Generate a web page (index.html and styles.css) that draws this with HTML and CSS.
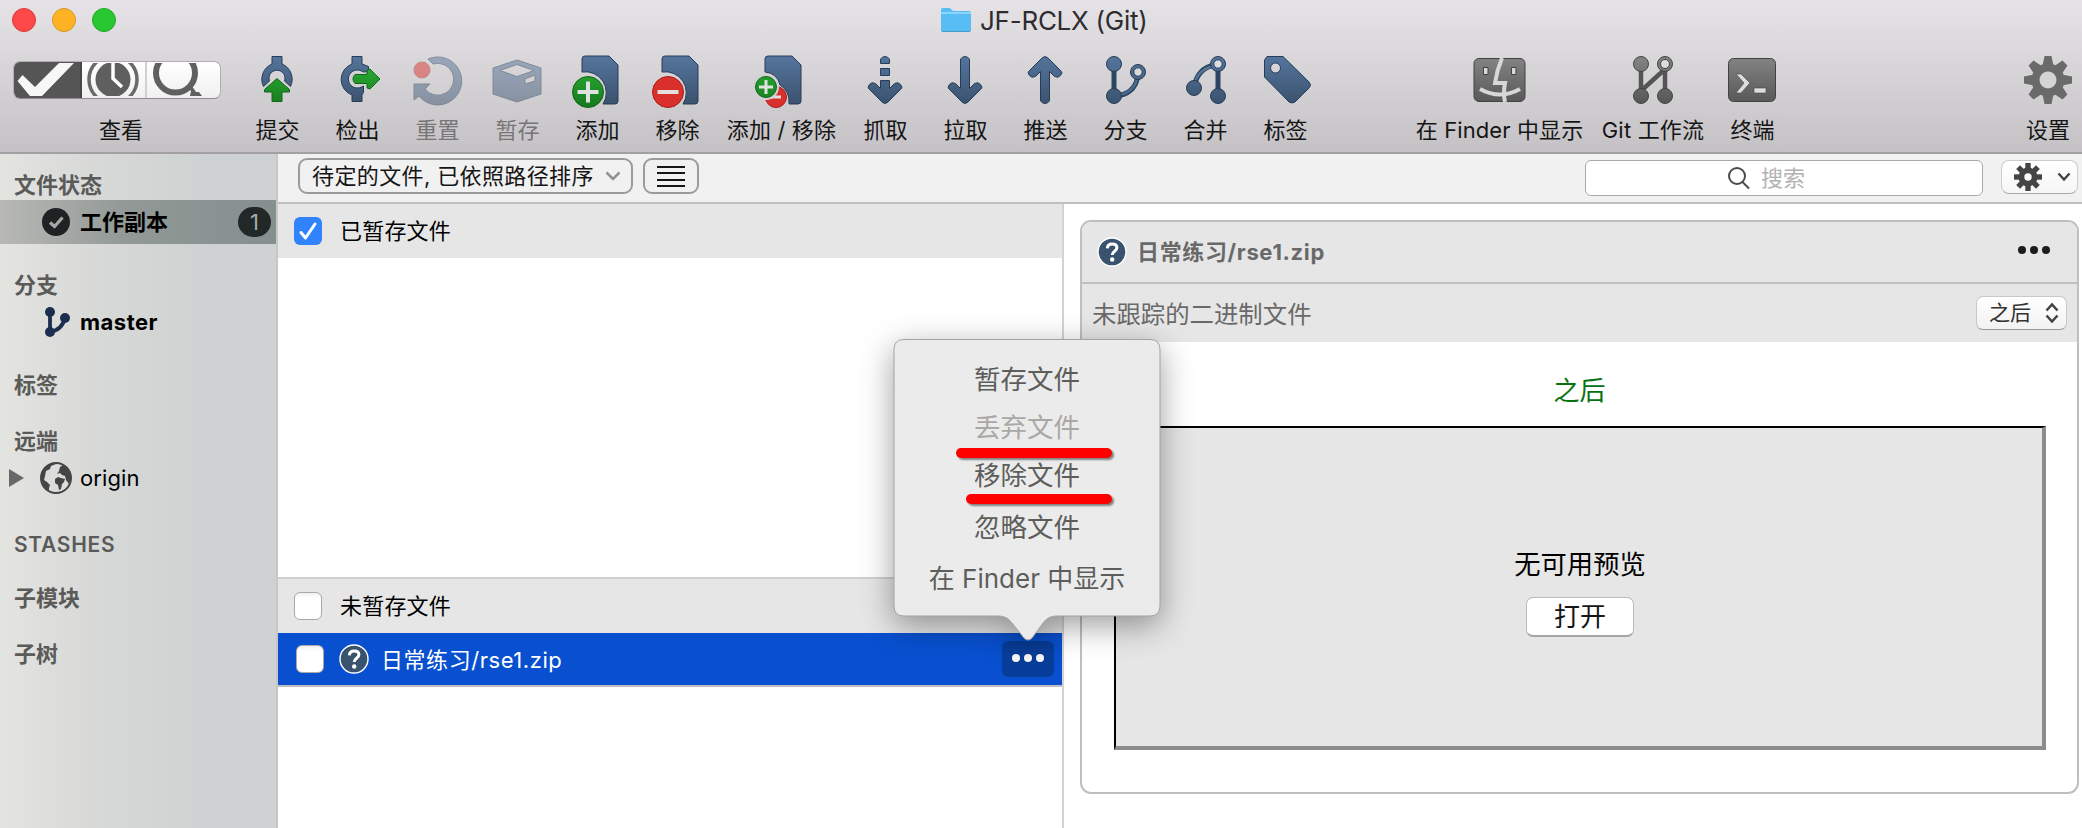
FILE: index.html
```html
<!DOCTYPE html>
<html lang="zh-CN">
<head>
<meta charset="utf-8">
<title>JF-RCLX (Git)</title>
<link rel="stylesheet" href="styles.css">
</head>
<body>
<svg class="defs" width="0" height="0" aria-hidden="true">
  <defs>
    <linearGradient id="blue" gradientUnits="userSpaceOnUse" x1="0" y1="2" x2="0" y2="50"><stop offset="0" stop-color="#56759d"/><stop offset="1" stop-color="#3a526e"/></linearGradient>
    <linearGradient id="green" gradientUnits="userSpaceOnUse" x1="0" y1="18" x2="0" y2="52"><stop offset="0" stop-color="#27a430"/><stop offset="1" stop-color="#167a1e"/></linearGradient>
    <linearGradient id="grey" gradientUnits="userSpaceOnUse" x1="0" y1="2" x2="0" y2="50"><stop offset="0" stop-color="#858585"/><stop offset="1" stop-color="#565656"/></linearGradient>
    <symbol id="question" viewBox="0 0 30 30">
      <circle cx="15" cy="15" r="14" fill="#39536f" stroke="#fff" stroke-width="1.4"/>
      <path d="M10.300 11.300C10.500 8.400 12.400 6.900 15.200 6.900c2.900 0 4.700 1.600 4.700 3.900 0 3.400-4.700 3.500-4.700 7.200" fill="none" stroke="#fff" stroke-width="3"/>
      <circle cx="15.200" cy="22.500" r="2.200" fill="#fff"/>
    </symbol>
  </defs>
</svg>
<div class="window">
  <header class="header">
    <div class="titlebar">
      <div class="lights"><i class="light red"></i><i class="light amber"></i><i class="light lime"></i></div>
      <div class="title">
        <svg width="32" height="26" viewBox="0 0 32 26"><path d="M1 3q0-2 2-2h7l3 3h16q2 0 2 2v17q0 2-2 2H3q-2 0-2-2z" fill="#57bdf4"/><path d="M1 6h30" stroke="#8bd5fb" stroke-width="2"/><path d="M2 24.500h28" stroke="#459bc9"/></svg>
        <span>JF-RCLX (Git)</span>
      </div>
    </div>
    <nav class="toolbar">
      <div class="tool view">
        <div class="segments">
          <span class="seg on"><svg width="66" height="33" viewBox="0 1 66 33"><path d="M3.500 19l5-6L21 25 45 1h15L28 34H16z" fill="#f7f7f7"/></svg></span>
          <span class="seg"><svg width="64" height="33" viewBox="0 2 64 33"><g transform="translate(31 18.500)"><circle r="24" fill="none" stroke="#6a6a6a" stroke-width="3.500"/><circle r="17.500" fill="#5f5f5f"/><path d="M0-17V-1l9 8.500" fill="none" stroke="#fff" stroke-width="3.500"/></g></svg></span>
          <span class="seg"><svg width="73" height="33" viewBox="0 1 73 33"><circle cx="28.500" cy="11" r="19.500" fill="none" stroke="#606060" stroke-width="6"/><path d="M41 26l3 3-1 5h12l-3-4h-3l-4-6z" fill="#606060"/></svg></span>
        </div>
        <span class="label">查看</span>
      </div>
      <div class="tool"><svg class="icon" viewBox="0 0 56 56"><path d="M23 2.500h10V10a16.500 16.500 0 0 1 8.500 22.500L35.500 27a8 8 0 1 0-15 0l-6 5.500A16.500 16.500 0 0 1 23 10z" fill="url(#blue)" stroke="#263d59"/><path d="M28 24.500l12.500 11v2.500H33v9.500H23V38h-7.500v-2.500z" fill="url(#green)" stroke="#14671b" stroke-linejoin="round"/></svg><span class="label">提交</span></div>
      <div class="tool"><svg class="icon" viewBox="0 0 56 56"><path d="M23 2.500h10V10l6.500 2.500v5l-5 .5-2-1a9 9 0 1 0 0 16l2-1v6.500L33 41v6.500H23V41a16.500 16.500 0 0 1 0-31z" fill="url(#blue)" stroke="#263d59"/><path d="M24 19h16l11 6-11 6H24q-7-6 0-12z" fill="#cfcfd1"/><path d="M26 20.500h12V16l3-1 10 10-10 10-3-1v-4.500H26q-4-4.500 0-9z" fill="url(#green)" stroke="#14671b" stroke-linejoin="round"/></svg><span class="label">检出</span></div>
      <div class="tool off"><svg class="icon" viewBox="0 0 56 56"><circle cx="13" cy="16" r="8" fill="#dc2f2a" stroke="#b0322d"/><path d="M19 5A24 24 0 1 1 10 42L5 46V30h16l-5 5A16 16 0 1 0 24 10z" fill="url(#blue)" stroke="#263d59"/></svg><span class="label">重置</span></div>
      <div class="tool off"><svg class="icon" viewBox="0 0 56 56"><path d="M4 14l24-8 24 8v26l-24 8-24-8zM11 16.500l17 6 17-6-17-6zM36 25v5l10-3v-6z" fill="url(#blue)" fill-rule="evenodd" stroke="#263d59"/></svg><span class="label">暂存</span></div>
      <div class="tool"><svg class="icon" viewBox="0 0 56 56"><path d="M16 2h24l9 9v36q0 3-3 3H34a21 21 0 0 0-21-32V5q0-3 3-3z" fill="url(#blue)" stroke="#263d59"/><circle cx="19" cy="38" r="15.500" fill="url(#green)" stroke="#14671b"/><path d="M8.500 38h21M19 27.500v21" stroke="#e0e2e0" stroke-width="4"/></svg><span class="label">添加</span></div>
      <div class="tool"><svg class="icon" viewBox="0 0 56 56"><path d="M16 2h24l9 9v36q0 3-3 3H34a21 21 0 0 0-21-32V5q0-3 3-3z" fill="url(#blue)" stroke="#263d59"/><circle cx="19" cy="38" r="15.500" fill="#d9302b" stroke="#a81e1d"/><path d="M8.500 38h21" stroke="#e5dede" stroke-width="4"/></svg><span class="label">移除</span></div>
      <div class="tool wide"><svg class="icon" viewBox="0 0 56 56"><path d="M15 2h24l9 9v36q0 3-3 3h-9q1-13-9-19-3-12-15-13V5q0-3 3-3z" fill="url(#blue)" stroke="#263d59"/><circle cx="23" cy="43" r="10.500" fill="#d9302b" stroke="#a81e1d"/><path d="M17 43h11" stroke="#e5dede" stroke-width="3"/><circle cx="13" cy="33" r="13" fill="#d2d0d2"/><circle cx="13" cy="33" r="10.500" fill="url(#green)" stroke="#14671b"/><path d="M6 33h14M13 26v14" stroke="#e0e2e0" stroke-width="3"/></svg><span class="label">添加 / 移除</span></div>
      <div class="tool"><svg class="icon" viewBox="0 0 56 56"><path d="M23.500 9.500V5q4.500-5 9 0v4.500zM23.500 14.500h9v7h-9zM23.500 26.500h9v8l5-5q4-2 6 1 3 3 0 5L31 48q-3 3-6 0L12.500 35.500q-3-2 0-5 2-3 6-1l5 5z" fill="url(#blue)" stroke="#263d59"/></svg><span class="label">抓取</span></div>
      <div class="tool"><svg class="icon" viewBox="0 0 56 56"><path d="M23.500 5q4.500-5 9 0v29.500l5-5q4-2 6 1 3 3 0 5L31 48q-3 3-6 0L12.500 35.500q-3-2 0-5 2-3 6-1l5 5z" fill="url(#blue)" stroke="#263d59"/></svg><span class="label">拉取</span></div>
      <div class="tool"><svg class="icon" viewBox="0 0 56 56"><path d="M23.500 47q4.500 5 9 0V17.500l5 5q4 2 6-1 3-3 0-5L31 4q-3-3-6 0L12.500 16.500q-3 2 0 5 2 3 6 1l5-5z" fill="url(#blue)" stroke="#263d59"/></svg><span class="label">推送</span></div>
      <div class="tool"><svg class="icon" viewBox="0 0 56 56"><path d="M17 10v32M40.500 24Q37 40 19 42" fill="none" stroke="#2c4560" stroke-width="5"/><path d="M40 26Q36 38 23 41" fill="none" stroke="#4c6a8d" stroke-width="2.500"/><g fill="url(#blue)" stroke="#263d59"><circle cx="17" cy="10" r="7.500"/><circle cx="17" cy="42" r="7.500"/><circle cx="41" cy="18" r="7.500"/></g><circle cx="41" cy="18" r="4.200" fill="#dad8da" stroke="#263d59"/></svg><span class="label">分支</span></div>
      <div class="tool"><svg class="icon" viewBox="0 0 56 56"><path d="M41 10v32M17 34Q20 14 38 11" fill="none" stroke="#2c4560" stroke-width="5"/><path d="M18 28Q21 17 34 12.500" fill="none" stroke="#56739a" stroke-width="2.500"/><g fill="url(#blue)" stroke="#263d59"><circle cx="41" cy="10" r="7.500"/><circle cx="17" cy="34" r="7.500"/><circle cx="41" cy="42" r="7.500"/></g><circle cx="41" cy="10" r="4.200" fill="#dddbdd" stroke="#263d59"/></svg><span class="label">合并</span></div>
      <div class="tool"><svg class="icon" viewBox="0 0 56 56"><path d="M10 2.500h16L52 28q3 3 0 6L38 48q-3 2-6 0L7.500 23V6zM23.500 14a5 5 0 1 0-10 0 5 5 0 0 0 10 0z" fill="url(#blue)" fill-rule="evenodd" stroke="#263d59"/></svg><span class="label">标签</span></div>
      <div class="tool finder"><svg class="icon" viewBox="0 0 56 56"><rect x="3" y="4.500" width="51" height="43" rx="5" fill="url(#grey)" stroke="#424242"/><g fill="none" stroke="#d8d6d8"><path d="M31 4q-5 12-7 25h10q-2 10 0 19" stroke-width="4"/><path d="M9 35q20 11 40 0" stroke-width="4"/></g><g fill="#dad8da" stroke="#424242"><path d="M12.500 13.500h4.500v7h-4.500zM40.500 13.500H45v7h-4.500z"/></g></svg><span class="label">在 Finder 中显示</span></div>
      <div class="tool flow"><svg class="icon" viewBox="0 0 56 56"><path d="M16 10v32M40 10v32M17 36l22-20" fill="none" stroke="#555" stroke-width="4.500"/><g fill="url(#grey)" stroke="#444"><circle cx="16" cy="10" r="7.500"/><circle cx="16" cy="42" r="7.500"/><circle cx="40" cy="10" r="7.500"/><circle cx="40" cy="42" r="7.500"/></g><circle cx="40" cy="10" r="4.500" fill="#dddbdd" stroke="#444"/></svg><span class="label">Git 工作流</span></div>
      <div class="tool term"><svg class="icon" viewBox="0 0 56 56"><rect x="4.500" y="4.500" width="47" height="43" rx="5" fill="url(#grey)" stroke="#424242"/><path d="M12 20h5l9 9-9 10h-5l8-10zM30 34h12v5H30z" fill="#dedcde" stroke="#444" stroke-width=".6"/></svg><span class="label">终端</span></div>
      <div class="tool prefs"><svg class="icon" viewBox="-28 -26 56 56"><g class="gear"><path d="M-5.500-14l2-10h7l2 10v28l-2 10h-7l-2-10z"/><path d="M-5.500-14l2-10h7l2 10v28l-2 10h-7l-2-10z" transform="rotate(45)"/><path d="M-5.500-14l2-10h7l2 10v28l-2 10h-7l-2-10z" transform="rotate(90)"/><path d="M-5.500-14l2-10h7l2 10v28l-2 10h-7l-2-10z" transform="rotate(135)"/><circle r="16.500"/><circle r="8.500" class="hole"/></g></svg><span class="label">设置</span></div>
    </nav>
  </header>

  <div class="body">
    <aside class="sidebar">
      <h2 class="group g-status">文件状态</h2>
      <div class="row selected">
        <svg width="28" height="28" viewBox="0 0 28 28"><circle cx="14" cy="14" r="14" fill="#1f2222"/><path d="M8 14.500l4.500 4 8-9" fill="none" stroke="#a4a8a6" stroke-width="3.200"/></svg>
        <span>工作副本</span><b class="badge">1</b>
      </div>
      <h2 class="group g-branch">分支</h2>
      <div class="row branch">
        <svg width="28" height="32" viewBox="0 0 28 32"><g fill="none" stroke="#1c2e50" stroke-width="3.800"><path d="M8 6v20M23 12Q20 24 8 26"/></g><g fill="#1c2e50"><circle cx="8" cy="6" r="5"/><circle cx="8" cy="26" r="5"/><circle cx="23" cy="12" r="5"/></g></svg>
        <span>master</span>
      </div>
      <h2 class="group g-tag">标签</h2>
      <h2 class="group g-remote">远端</h2>
      <div class="row remote">
        <svg width="16" height="18" viewBox="0 0 16 18"><path d="M0 0l15 9-15 9z" fill="#686868"/></svg>
        <svg class="globe" width="32" height="32" viewBox="0 0 32 32"><circle cx="16" cy="16" r="15" fill="#dcdddb" stroke="#454545" stroke-width="2"/><path d="M2 11q3-8 11-10l3 1-5 2-1 3-4 2-1 5-1 4 3 2 3 3-1 3v4q-8-4-8-14zM15 17l3-2 3 1 4 1-1 3-2 2-1 5-2 1-1-5-3-2zM17 12l2-3 1-4 3-2q7 5 8 13l-2 6-3-4-1-4-3-1-2-2z" fill="#454545"/></svg>
        <span>origin</span>
      </div>
      <h2 class="group g-stash">STASHES</h2>
      <h2 class="group g-sub">子模块</h2>
      <h2 class="group g-tree">子树</h2>
    </aside>

    <main class="main">
      <div class="filterbar">
        <div class="select"><span>待定的文件, 已依照路径排序</span><svg width="16" height="10" viewBox="0 0 16 10"><path d="M1.500 1.500L8 8l6.500-6.500" fill="none" stroke="#929292" stroke-width="2.500"/></svg></div>
        <div class="listbtn"><i></i><i></i><i></i><i></i></div>
        <div class="search"><svg width="24" height="24" viewBox="0 0 24 24"><g fill="none" stroke="#4b4b4b" stroke-width="2"><circle cx="10" cy="10" r="8"/><path d="M15.500 16l6.500 6.500"/></g></svg><span>搜索</span></div>
        <div class="gearbtn">
          <svg width="28" height="28" viewBox="-14 -14 28 28"><g fill="#454545"><circle r="9.500"/><path d="M-2.700-14h5.400v28h-5.400z"/><path d="M-2.700-14h5.400v28h-5.400z" transform="rotate(45)"/><path d="M-2.700-14h5.400v28h-5.400z" transform="rotate(90)"/><path d="M-2.700-14h5.400v28h-5.400z" transform="rotate(135)"/></g><circle r="3.700" fill="#fafafa"/></svg>
          <svg width="14" height="10" viewBox="0 0 14 10"><path d="M1.500 1.500L7 7.500l5.500-6" fill="none" stroke="#444" stroke-width="2.500"/></svg>
        </div>
      </div>

      <div class="panes">
        <section class="files">
          <div class="filehead"><span class="check checked"><svg width="28" height="28" viewBox="0 0 28 28"><path d="M7 15.500l4.500 5.500L21 7" fill="none" stroke="#fff" stroke-width="3" stroke-linecap="round" stroke-linejoin="round"/></svg></span><span>已暂存文件</span></div>
          <div class="staged"></div>
          <div class="filehead unstaged"><span class="check"></span><span>未暂存文件</span></div>
          <div class="file">
            <span class="check"></span>
            <svg width="30" height="30"><use href="#question"/></svg>
            <span class="filename">日常练习/rse1.zip</span>
            <span class="more"><i></i><i></i><i></i></span>
          </div>
          <div class="popover">
            <svg class="balloon" width="268" height="302" viewBox="0 0 268 302"><path d="M11 .5H257q10 0 10 10V267q0 10-10 10H163q-8 0-13 7l-11 15q-4 4-8 0L119 284q-5-7-13-7H11q-10 0-10-10V10.500q0-10 10-10z" fill="#ebebeb" stroke="#a3a3a3"/></svg>
            <div class="menu">
              <span>暂存文件</span><span class="dim">丢弃文件</span><span>移除文件</span><span class="ignore">忽略文件</span><span class="reveal">在 Finder 中显示</span>
            </div>
            <i class="mark first"></i><i class="mark second"></i>
          </div>
        </section>

        <section class="detail">
          <article class="card">
            <div class="cardhead"><svg width="30" height="30"><use href="#question"/></svg><strong>日常练习/rse1.zip</strong><span class="dots"><i></i><i></i><i></i></span></div>
            <div class="cardsub"><span>未跟踪的二进制文件</span><span class="popup">之后<svg width="14" height="20" viewBox="0 0 14 20"><path d="M1.500 7.500L7 1.500l5.500 6M1.500 12.500l5.500 6 5.500-6" fill="none" stroke="#424242" stroke-width="2.500"/></svg></span></div>
            <div class="after">之后</div>
            <div class="preview"><span>无可用预览</span><button class="open">打开</button></div>
          </article>
        </section>
      </div>
    </main>
  </div>
</div>
</body>
</html>
```

FILE: styles.css
```css
* { box-sizing: border-box; }
body { margin: 0; background: #fff; font: 22px/30px Inter, "Noto Sans CJK SC", sans-serif; color: #111; }
.defs { position: absolute; }
svg { display: block; flex: none; }
.window { width: 2082px; height: 828px; overflow: hidden; display: flex; flex-direction: column; }

.header { height: 154px; flex: none; background: linear-gradient(#e5e3e5, #d5d3d5 50%, #c5c2c5); border-bottom: 2px solid #a3a0a3; }
.titlebar { height: 41px; display: grid; grid-template-columns: 940px auto; }
.lights { display: flex; gap: 16px; padding: 8px 12px; }
.light { width: 24px; height: 24px; border-radius: 50%; border: 1px solid; }
.red { background: #fc4848; border-color: #dd3537; }
.amber { background: #fdb324; border-color: #dc9427; }
.lime { background: #29c732; border-color: #20a62b; }
.title { display: flex; gap: 8px; padding-top: 7px; height: 36px; font-size: 26px; line-height: 28px; color: #2e2c2e; letter-spacing: -.25px; white-space: nowrap; }

.toolbar { display: flex; padding-top: 13px; }
.tool { width: 80px; flex: none; display: flex; flex-direction: column; align-items: center; color: #151515; }
.icon { width: 56px; height: 56px; overflow: visible; }
.label { margin-top: 4px; padding-left: 1px; white-space: nowrap; line-height: 32px; }
.off .icon { opacity: .48; }
.off .label { color: #777577; }
.view { width: 237px; align-items: flex-start; }
.view .label { margin: 16px 0 0 98px; }
.wide { width: 128px; }
.wide .label { letter-spacing: .15px; }
.finder { width: 172px; margin-left: 88px; }
.finder .label { letter-spacing: .1px; }
.flow { width: 135px; }
.flow .label { letter-spacing: .2px; }
.term { width: 64px; }
.prefs { width: 69px; margin-left: auto; }
.gear { fill: #6a6a6a; }
.gear .hole { fill: #d5d3d5; }
.segments { display: flex; width: 208px; height: 38px; margin: 7px 0 -1px 13px; border: 1px solid #b0aeb0; border-bottom-color: #8d8b8d; border-radius: 7px; background: linear-gradient(#fff, #f0f0f0); overflow: hidden; }
.seg { border-right: 2px solid #d0d0d0; overflow: hidden; padding-top: 1px; }
.seg:last-child { border: 0; }
.seg.on { background: #555; border-right-color: #484848; }

.body { display: flex; flex: 1; }
.sidebar { width: 278px; flex: none; border-right: 2px solid #c7c7c9; background: linear-gradient(90deg, #e4e4e1, #d7d9d7 35%, #ced2d2 75%, #cfd2d2); }
.group { margin: 0; padding-left: 14px; font-size: 22px; line-height: 30px; font-weight: 600; color: #5a5a59; }
.g-status { padding-top: 16px; height: 46px; }
.row { display: flex; align-items: center; gap: 10px; color: #000; }
.selected { height: 44px; padding: 0 5px 0 42px; font-weight: 600; background: linear-gradient(90deg, #b8b9b5, #929997 45%, #858f8e); }
.badge { margin-left: auto; width: 33px; height: 30px; border-radius: 15px; background: #222828; color: #a5abaa; font-weight: 400; text-align: center; }
.g-branch { margin-top: 26px; }
.branch { height: 42px; padding: 1px 0 0 42px; font-weight: 700; letter-spacing: .5px; }
.g-tag { margin-top: 28px; }
.g-remote { margin-top: 26px; }
.remote { height: 42px; padding: 1px 0 0 9px; gap: 0; letter-spacing: .1px; }
.globe { margin: 0 8px 0 15px; }
.g-stash { margin-top: 32px; font-size: 21px; letter-spacing: .7px; }
.g-sub { margin-top: 23px; }
.g-tree { margin-top: 26px; }

.main { flex: 1; display: flex; flex-direction: column; min-width: 0; }
.filterbar { height: 50px; display: flex; align-items: flex-start; background: #f1f1f1; border-bottom: 2px solid #bfbfbf; padding: 4px 4px 0 20px; }
.select { width: 335px; height: 36px; border: 2px solid #9b9b9b; border-radius: 9px; display: flex; align-items: center; justify-content: space-between; padding: 0 10px 0 12px; white-space: nowrap; color: #151515; letter-spacing: .38px; }
.listbtn { width: 56px; height: 36px; margin-left: 10px; border: 2px solid #9b9b9b; border-radius: 9px; padding: 6px 12px 0; display: flex; flex-direction: column; gap: 4.3px; }
.listbtn i { height: 2px; flex: none; background: #161616; }
.search { width: 398px; height: 36px; margin: 2px 18px 0 auto; padding-left: 141px; border: 1px solid #aaa; border-radius: 6px; background: #fff; display: flex; align-items: center; gap: 10px; color: #b2b2b2; }
.gearbtn { width: 77px; height: 34px; margin-top: 2px; border: 1px solid #cdcdcd; border-bottom-color: #aaa; border-radius: 8px; background: linear-gradient(#fff, #f6f6f6); display: flex; align-items: center; justify-content: space-between; padding: 0 6px 0 12px; }

.panes { flex: 1; display: flex; }
.files { position: relative; width: 786px; border-right: 2px solid #d3d3d3; }
.filehead { height: 54px; display: flex; align-items: center; gap: 18px; padding-left: 16px; background: #e6e6e6; color: #000; letter-spacing: .2px; }
.staged { height: 319px; }
.unstaged { height: 56px; border-top: 2px solid #cfcfcf; }
.check { width: 28px; height: 28px; flex: none; border: 1px solid #a9a9a9; border-radius: 6px; background: linear-gradient(#f0f0f0, #fff 20%); }
.checked { border: 0; background: #3183fc; }
.file { height: 54px; display: flex; align-items: center; padding: 0 8px 0 18px; background: #0850d0; border-bottom: 2px solid #bfbfbf; color: #fff; }
.file svg { margin: 0 12px 0 15px; }
.filename { letter-spacing: .55px; padding-top: 1px; }
.more { width: 52px; height: 36px; margin-left: auto; border-radius: 6px; background: #083e9c; display: flex; align-items: center; justify-content: center; gap: 4px; padding-bottom: 2px; }
.more i { width: 8px; height: 8px; border-radius: 50%; background: #fff; }

.popover { position: absolute; left: 615px; top: 135px; width: 268px; height: 302px; z-index: 2; color: #5d5d5b; }
.balloon { position: absolute; overflow: visible; filter: drop-shadow(0 9px 16px rgba(0, 0, 0, .38)); }
.menu { position: relative; padding-top: 16px; font-size: 26.500px; line-height: 48px; display: flex; flex-direction: column; align-items: center; white-space: nowrap; }
.dim { color: #aaa8a5; }
.ignore { margin-top: 4px; }
.reveal { margin-top: 4px; font-size: 26px; }
.mark { position: absolute; height: 10px; border-radius: 5px; background: #f00; box-shadow: 2px 2px 2px rgba(0, 0, 0, .45); }
.first { left: 63px; top: 109px; width: 156px; }
.second { left: 73px; top: 155px; width: 146px; }

.detail { flex: 1; padding: 16px 3px 0 16px; }
.card { height: 574px; border: 2px solid #bfbfbf; border-radius: 11px; overflow: hidden; background: #fff; color: #696969; }
.cardhead { height: 62px; display: flex; align-items: center; gap: 10px; padding: 0 27px 0 15px; background: #e6e6e6; border-bottom: 2px solid #bfbfbf; }
.cardhead strong { font-weight: 700; letter-spacing: .65px; }
.dots { margin: 0 0 4px auto; display: flex; gap: 4px; }
.dots i { width: 8px; height: 8px; border-radius: 50%; background: #1c1c1c; }
.cardsub { height: 58px; display: flex; align-items: center; justify-content: space-between; padding: 2px 10px 0; background: #e6e6e6; font-size: 24.400px; }
.popup { width: 91px; height: 34px; margin-bottom: 2px; display: flex; align-items: center; gap: 14px; padding-left: 12px; border: 1px solid #c8c8c8; border-bottom-color: #999; border-radius: 7px; background: linear-gradient(#fff, #f2f2f2); font-size: 21px; line-height: 30px; color: #333; }
.after { height: 84px; padding-top: 33px; text-align: center; font-size: 26px; line-height: 32px; color: #06720f; }
.preview { height: 324px; margin: 0 31px 0 32px; border: 2px solid #000; border-right: 4px solid #8c8c8c; border-bottom: 4px solid #8c8c8c; background: #e6e6e6; display: flex; flex-direction: column; align-items: center; padding: 119px 0 0 2px; font-size: 26.300px; line-height: 36px; color: #000; }
.open { width: 108px; height: 40px; margin-top: 14px; padding: 0; border: 1px solid #bbb; border-bottom: 2px solid #a5a5a5; border-radius: 7px; background: #fff; font: 26px/36px Inter, "Noto Sans CJK SC", sans-serif; color: #151515; }
```
